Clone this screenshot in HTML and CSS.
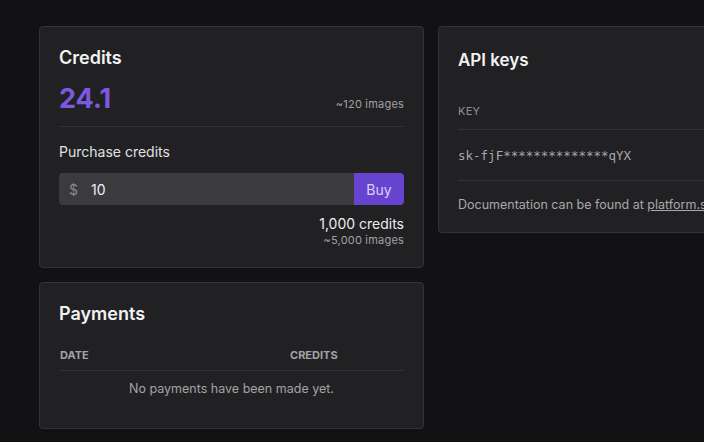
FILE: index.html
```html
<!DOCTYPE html>
<html>
<head>
<meta charset="utf-8">
<link rel="stylesheet" href="styles.css">
</head>
<body>
<main class="dashboard">
  <div class="col">
    <section class="card">
      <h2 class="card-title">Credits</h2>
      <div class="balance-row">
        <span class="balance">24.1</span>
        <span class="muted-small">~120 images</span>
      </div>
      <div class="divider"></div>
      <div class="label">Purchase credits</div>
      <div class="buy-row">
        <div class="amount-field">
          <span class="currency">$</span>
          <span class="amount">10</span>
        </div>
        <button class="buy-btn">Buy</button>
      </div>
      <div class="summary">
        <div class="summary-credits">1,000 credits</div>
        <div class="muted-small">~5,000 images</div>
      </div>
    </section>
    <section class="card">
      <h2 class="card-title">Payments</h2>
      <div class="table-head">
        <span class="th">Date</span>
        <span class="th">Credits</span>
      </div>
      <div class="empty">No payments have been made yet.</div>
    </section>
  </div>
  <div class="col">
    <section class="card api">
      <h2 class="card-title api-title">API keys</h2>
      <div class="key-head">Key</div>
      <div class="key-row">sk-fjF**************qYX</div>
      <div class="doc">Documentation can be found at <a class="link">platform.stability.ai/docs</a></div>
    </section>
  </div>
</main>
</body>
</html>
```
FILE: styles.css
```css
* { box-sizing: border-box; }
html, body { margin: 0; padding: 0; }
body {
  background: #121214;
  font-family: Inter, "Noto Sans", sans-serif;
  color: #e6e6e8;
  overflow: hidden;
  width: 704px;
  height: 442px;
}
.dashboard {
  display: flex;
  gap: 14px;
  padding: 26px 0 0 39px;
}
.col {
  display: flex;
  flex-direction: column;
  gap: 14px;
  width: 385px;
  flex-shrink: 0;
}
.card {
  background: #212123;
  border: 1px solid #333336;
  border-radius: 4px;
  padding: 20px 19px 20px 19px;
}
.card-title {
  margin: 0;
  font-size: 18px;
  font-weight: 600;
  color: #f2f2f3;
  line-height: 22px;
}
.balance-row {
  display: flex;
  justify-content: space-between;
  align-items: baseline;
  margin-top: 13px;
}
.balance {
  font-size: 27px;
  font-weight: 700;
  color: #7b5ae0;
  line-height: 34px;
}
.muted-small {
  font-size: 11px;
  color: #a0a0a4;
  line-height: 13px;
  text-align: right;
  letter-spacing: 0.2px;
}
.divider {
  height: 1px;
  background: #333336;
  margin-top: 10px;
}
.label {
  margin-top: 16px;
  font-size: 14px;
  line-height: 17px;
  color: #e0e0e2;
}
.buy-row {
  display: flex;
  margin-top: 13px;
  height: 32px;
}
.amount-field {
  flex: 1;
  background: #3b3b3d;
  border-radius: 4px 0 0 4px;
  display: flex;
  align-items: center;
  padding-left: 10px;
  font-size: 14px;
}
.currency { color: #8a8a8e; width: 22px; }
.amount { color: #f0f0f2; }
.buy-btn {
  width: 50px;
  border: 0;
  border-radius: 0 4px 4px 0;
  background: #6744cf;
  color: #d9d0f6;
  font-family: inherit;
  font-size: 14px;
  padding: 0;
}
.summary {
  margin-top: 10px;
  text-align: right;
}
.summary-credits {
  font-size: 14px;
  line-height: 17px;
  color: #ececee;
}
.summary .muted-small { margin-top: 2px; }
.table-head {
  display: grid;
  grid-template-columns: 230px 1fr;
  margin-top: 24px;
  padding-bottom: 8px;
  border-bottom: 1px solid #333336;
}
.th {
  font-size: 11px;
  font-weight: 700;
  line-height: 13px;
  text-transform: uppercase;
  color: #a3a3a7;
  padding-left: 1px;
}
.empty {
  text-align: center;
  font-size: 12.5px;
  line-height: 16px;
  color: #a3a3a7;
  padding: 10px 0 11px;
}
.api { padding-top: 23px; padding-bottom: 19px; }
.api-title { font-size: 17px; line-height: 21px; }
.key-head {
  margin-top: 34px;
  font-size: 11px;
  line-height: 13px;
  text-transform: uppercase;
  color: #8f8f93;
  letter-spacing: 0.3px;
  padding-bottom: 11px;
  border-bottom: 1px solid #333336;
}
.key-row {
  font-family: "DejaVu Sans Mono", monospace;
  font-size: 12.5px;
  line-height: 15px;
  color: #a8a8ac;
  padding: 18px 0 17px;
  border-bottom: 1px solid #333336;
  white-space: nowrap;
}
.doc {
  font-size: 12.5px;
  line-height: 16px;
  color: #a8a8ac;
  padding-top: 16px;
  white-space: nowrap;
}
.link {
  color: #a8a8ac;
  text-decoration: underline;
}
```
